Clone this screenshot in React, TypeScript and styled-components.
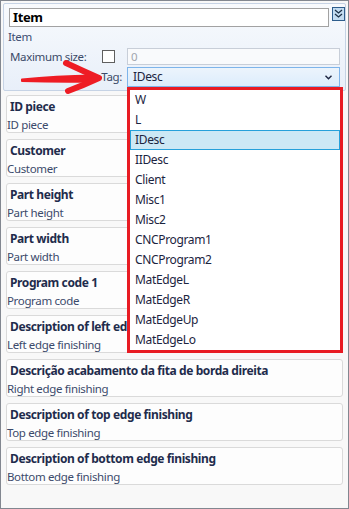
import React from 'react';
import styled, { createGlobalStyle } from 'styled-components';

const Global = createGlobalStyle`
  html, body { margin: 0; padding: 0; background: #ffffff; }
  body { font-family: "Noto Sans", "DejaVu Sans", sans-serif; }
  * { box-sizing: border-box; }
`;

const Window = styled.div`
  position: relative;
  width: 349px;
  height: 509px;
  border: 1px solid #828790;
  background: #f8f8f8;
  padding: 2px 2px 0 2px;
  display: flex;
  flex-direction: column;
  overflow: hidden;
  font-size: 11.5px;
  letter-spacing: -0.35px;
`;

const HeaderPanel = styled.div`
  height: 88px;
  border: 1px solid #c6d3e5;
  border-radius: 2px;
  background: linear-gradient(#f8fafd, #e8eff9);
  padding: 4px 0 0 5px;
  display: flex;
  flex-direction: column;
`;

const TitleRow = styled.div`
  display: flex;
  align-items: flex-start;
  gap: 3px;
`;

const TitleInput = styled.div`
  width: 320px;
  height: 19px;
  border: 1px solid #a2a2a2;
  background: #ffffff;
  font-weight: 700;
  font-size: 13px;
  letter-spacing: -0.4px;
  line-height: 17px;
  padding-left: 3px;
  color: #000000;
`;

const CollapseBox = styled.svg`
  margin-top: -1px;
  flex: none;
`;

const SmallLabel = styled.div`
  margin: 2px 0 0 -1px;
  height: 16px;
  line-height: 16px;
  color: #3c4d72;
`;

const FieldRow = styled.div<{ $top: number; $h: number }>`
  display: flex;
  align-items: center;
  margin-top: ${p => p.$top}px;
  height: ${p => p.$h}px;
`;

const FieldLabel = styled.div<{ $w: number; $right?: boolean }>`
  width: ${p => p.$w}px;
  flex: none;
  color: #3b4a68;
  text-align: ${p => (p.$right ? 'right' : 'left')};
  padding: ${p => (p.$right ? '0 5px 0 0' : '0 0 0 1px')};
  line-height: 16px;
`;

const CheckBox = styled.div`
  width: 13px;
  height: 13px;
  border: 1px solid #5f5f5f;
  background: #ffffff;
  margin-right: 12px;
  flex: none;
`;

const NumberInput = styled.div`
  width: 213px;
  height: 17px;
  border: 1px solid #c8ced8;
  background: #f9fafc;
  color: #a2a6ae;
  line-height: 15px;
  padding-left: 3px;
`;

const SelectBox = styled.div`
  width: 213px;
  height: 20px;
  border: 1px solid #7eb4ea;
  background: linear-gradient(#ecf4fc, #dcecfc);
  color: #1b2440;
  font-size: 12px;
  line-height: 18px;
  padding: 0 7px 0 5px;
  display: flex;
  align-items: center;
  justify-content: space-between;
`;

const CardList = styled.div`
  display: flex;
  flex-direction: column;
  gap: 6px;
  padding: 4px 3px 0 3px;
`;

const Card = styled.div`
  height: 38px;
  border: 1px solid #dadada;
  border-radius: 3px;
  background: #fdfdfd;
  padding-top: 2px;
  display: flex;
  flex-direction: column;
`;

const CardTitle = styled.div`
  font-weight: 700;
  font-size: 12px;
  letter-spacing: -0.4px;
  color: #1f2c4c;
  line-height: 17px;
  padding-left: 3px;
  white-space: nowrap;
  overflow: hidden;
`;

const CardSub = styled.div`
  color: #3b4a6b;
  line-height: 14px;
  margin-top: 3px;
  white-space: nowrap;
`;

const Dropdown = styled.div`
  position: absolute;
  left: 126px;
  top: 86px;
  width: 216px;
  border: 3px solid #e81b23;
  background: #ffffff;
  display: flex;
  flex-direction: column;
  font-size: 12px;
  letter-spacing: -0.35px;
`;

const DropItem = styled.div<{ $selected?: boolean }>`
  height: 20px;
  line-height: ${p => (p.$selected ? 18 : 20)}px;
  padding-left: ${p => (p.$selected ? 4 : 5)}px;
  color: #1b2440;
  background: ${p => (p.$selected ? '#cce8f5' : 'transparent')};
  border: ${p => (p.$selected ? '1px solid #26a0da' : 'none')};
`;

const ArrowLayer = styled.svg`
  position: absolute;
  left: 0;
  top: 0;
  pointer-events: none;
`;

const cards: [string, string][] = [
  ['ID piece', 'ID piece'],
  ['Customer', 'Customer'],
  ['Part height', 'Part height'],
  ['Part width', 'Part width'],
  ['Program code 1', 'Program code'],
  ['Description of left edge finishing', 'Left edge finishing'],
  ['Descrição acabamento da fita de borda direita', 'Right edge finishing'],
  ['Description of top edge finishing', 'Top edge finishing'],
  ['Description of bottom edge finishing', 'Bottom edge finishing'],
];

const options = [
  'W', 'L', 'IDesc', 'IIDesc', 'Client', 'Misc1', 'Misc2', 'CNCProgram1',
  'CNCProgram2', 'MatEdgeL', 'MatEdgeR', 'MatEdgeUp', 'MatEdgeLo',
];

export default function App() {
  return (
    <>
      <Global />
      <Window>
        <HeaderPanel>
          <TitleRow>
            <TitleInput>Item</TitleInput>
            <CollapseBox width="13" height="14" viewBox="0 0 13 14">
              <rect x="0.5" y="0.5" width="12" height="13" fill="#c3dcf1" stroke="#2e5d8c" />
              <polyline points="3,3 6.5,6 10,3" fill="none" stroke="#1c3147" strokeWidth="1.3" />
              <polyline points="3,7 6.5,10 10,7" fill="none" stroke="#1c3147" strokeWidth="1.3" />
            </CollapseBox>
          </TitleRow>
          <SmallLabel>Item</SmallLabel>
          <FieldRow $top={3} $h={17}>
            <FieldLabel $w={93}>Maximum size:</FieldLabel>
            <CheckBox />
            <NumberInput>0</NumberInput>
          </FieldRow>
          <FieldRow $top={2} $h={20}>
            <FieldLabel $w={118} $right>Tag:</FieldLabel>
            <SelectBox>
              <span>IDesc</span>
              <svg width="7" height="5" viewBox="0 0 7 5">
                <polyline points="0.5,0.8 3.5,3.8 6.5,0.8" fill="none" stroke="#1b2440" strokeWidth="1.4" />
              </svg>
            </SelectBox>
          </FieldRow>
        </HeaderPanel>
        <CardList>
          {cards.map(([t, s]) => (
            <Card key={t}>
              <CardTitle>{t}</CardTitle>
              <CardSub>{s}</CardSub>
            </Card>
          ))}
        </CardList>
        <Dropdown>
          {options.map(o => (
            <DropItem key={o} $selected={o === 'IDesc'}>{o}</DropItem>
          ))}
        </Dropdown>
        <ArrowLayer width="120" height="100" viewBox="0 0 120 100">
          <path d="M21 78.5 Q55 75 92 74.5 L93 80.5 Q55 81 21 80 Z" fill="#ee1c24" stroke="#ee1c24" strokeWidth="2" strokeLinejoin="round" />
          <path d="M65 62 Q82 70 98 77 Q83 84 67 90" fill="none" stroke="#ee1c24" strokeWidth="6" strokeLinecap="round" strokeLinejoin="round" />
        </ArrowLayer>
      </Window>
    </>
  );
}
